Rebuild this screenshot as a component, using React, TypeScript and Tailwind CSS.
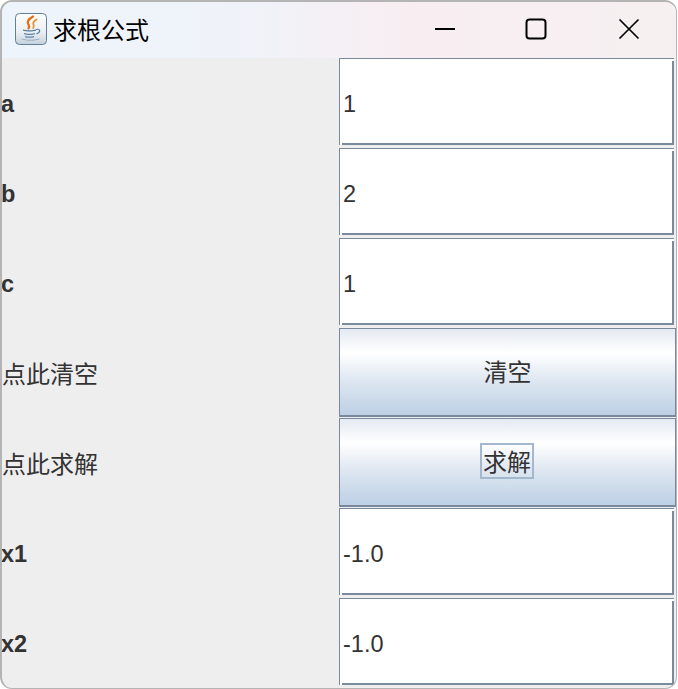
const cjk = { fontFamily: '"Noto Sans CJK SC", "Liberation Sans", sans-serif' };

function JavaIcon() {
  return (
    <svg width="32" height="32" viewBox="0 0 32 32" className="shrink-0">
      <defs>
        <linearGradient id="tile" x1="0" y1="0" x2="0" y2="1">
          <stop offset="0" stopColor="#fdfdfd" />
          <stop offset="0.6" stopColor="#eceff2" />
          <stop offset="1" stopColor="#c6d0da" />
        </linearGradient>
      </defs>
      <rect x="0.5" y="0.5" width="31" height="31" rx="4" fill="url(#tile)" stroke="#5f7f9c" />
      <path d="M18 3.500c-4 2.500-6.500 4.500-4.800 7.500 1 1.700 1.300 3 .3 4.500" fill="none" stroke="#e56f12" strokeWidth="2.200" strokeLinecap="round" />
      <path d="M21.500 6.500c-2.500 1.500-4 3-3 5 .6 1.200.5 2.300-.3 3.500" fill="none" stroke="#ef8f2e" strokeWidth="1.800" strokeLinecap="round" />
      <path d="M8 16.500c3 1 10 1 13 0v1.300c-3 1-10 1-13 0z" fill="#4f7ea6" />
      <path d="M9 20c2.500.9 8.500.9 11 0v1.300c-2.500.9-8.500.9-11 0z" fill="#5a86ac" />
      <path d="M21 16.500c4-1 5.500 2.200 .5 4.500" fill="none" stroke="#4f7ea6" strokeWidth="1.200" />
      <path d="M10 23c2.500.8 6.500.8 9 0v1.200c-2 .8-6.500.8-9 0z" fill="#5a86ac" />
      <path d="M6 25.500c4 1.700 15 1.700 19 0-1.500 2.800-17 2.800-19 0z" fill="#7fa0bd" />
    </svg>
  );
}

function Field({ value }: { value: string }) {
  return (
    <div className="flex-1 flex flex-col border-t border-l border-[#7a8a9c] bg-white mr-[2px] mb-[3px]">
      <div className="flex-1 flex items-center mt-[2px] ml-[2px] border-r-2 border-b-2 border-[#7a8a9c] bg-white pl-px pt-[5px] text-[23.500px] text-[#333]">
        {value}
      </div>
    </div>
  );
}

function GradientButton({ label, focused }: { label: string; focused?: boolean }) {
  return (
    <div className="flex-1 flex items-center justify-center border border-b-2 border-[#7a8a9c] mb-[1px] pb-[2px] bg-[linear-gradient(to_bottom,#e4eaf3_0%,#ffffff_28%,#e0e8f2_58%,#bcd0e4_100%)]">
      <span
        style={cjk}
        className={
          focused
            ? "border-2 border-[#a3b8cc] mr-px w-[54px] h-[36px] flex items-center justify-center text-[24px] leading-none text-[#333]"
            : "text-[24px] leading-none text-[#333]"
        }
      >
        {label}
      </span>
    </div>
  );
}

function Row({ label, cjkLabel, children }: { label: string; cjkLabel?: boolean; children: React.ReactNode }) {
  return (
    <div className="h-[90px] flex">
      <div className="w-[337px] flex items-center shrink-0 text-[#333]">
        {cjkLabel ? (
          <span style={cjk} className="text-[24px] leading-none">{label}</span>
        ) : (
          <span className="-ml-px pt-[4px] text-[23.500px] font-bold">{label}</span>
        )}
      </div>
      {children}
    </div>
  );
}

export default function App() {
  return (
    <div className="w-[678px] h-[689px] bg-white overflow-hidden" style={{ fontFamily: '"Liberation Sans", Arial, sans-serif' }}>
      <div className="w-[677px] h-[689px] rounded-[12px] overflow-hidden border-l-2 border-t-2 border-b-[1px] border-r border-[#b4b4b4] bg-[#eeeeee] flex flex-col">
        <div className="h-[56px] shrink-0 flex items-center pb-[2px] bg-[linear-gradient(to_right,#eef4fb_0%,#eff3f9_35%,#f8eef2_60%,#f6f0f1_100%)]">
          <div className="ml-[13px]">
            <JavaIcon />
          </div>
          <span style={cjk} className="ml-[6px] text-[24px] leading-none text-black">求根公式</span>
          <div className="ml-auto flex items-center text-black">
            <div className="w-[88px] flex justify-center">
              <svg width="22" height="22" viewBox="0 0 22 22"><path d="M1 11h20" stroke="#000" strokeWidth="2" /></svg>
            </div>
            <div className="w-[94px] flex justify-center">
              <svg width="22" height="22" viewBox="0 0 22 22"><rect x="1.500" y="1.500" width="19" height="19" rx="3" fill="none" stroke="#000" strokeWidth="2" /></svg>
            </div>
            <div className="w-[92px] flex justify-center mr-[1px]">
              <svg width="22" height="22" viewBox="0 0 22 22"><path d="M1.500 1.500l19 19M20.500 1.500l-19 19" stroke="#000" strokeWidth="1.700" /></svg>
            </div>
          </div>
        </div>
        <Row label="a"><Field value="1" /></Row>
        <Row label="b"><Field value="2" /></Row>
        <Row label="c"><Field value="1" /></Row>
        <Row label="点此清空" cjkLabel><GradientButton label="清空" /></Row>
        <Row label="点此求解" cjkLabel><GradientButton label="求解" focused /></Row>
        <Row label="x1"><Field value="-1.0" /></Row>
        <Row label="x2"><Field value="-1.0" /></Row>
      </div>
    </div>
  );
}
